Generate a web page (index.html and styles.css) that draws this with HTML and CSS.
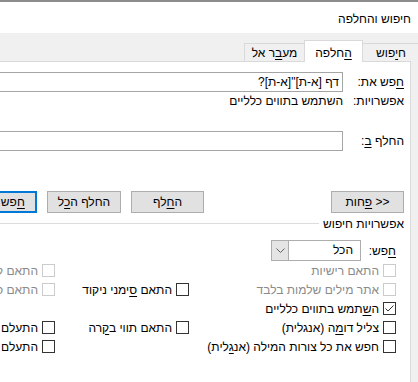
FILE: index.html
```html
<!DOCTYPE html>
<html dir="rtl" lang="he">
<head>
    <meta charset="utf-8">
    <title>חיפוש והחלפה</title>
    <link rel="stylesheet" href="styles.css">
</head>
<body>
    <div class="dialog">
        <!-- Title bar -->
        <div class="titlebar">חיפוש והחלפה</div>

        <!-- Tabs -->
        <div class="tabs">
            <div class="tab tab-first">ח<u>י</u>פוש</div>
            <div class="tab tab-active"><u>ה</u>חלפה</div>
            <div class="tab tab-last">מע<u>ב</u>ר אל</div>
        </div>

        <div class="panel">
            <div class="field">
                <div class="field-label"><u>ח</u>פש את:</div>
                <div class="textbox">דף [א-ת]"[א-ת]?</div>
            </div>
            <div class="field field-info">
                <div class="field-label">אפשרויות:</div>
                <div class="field-value">השתמש בתווים כלליים</div>
            </div>
            <div class="field field-replace">
                <div class="field-label">החלף <u>ב</u>:</div>
                <div class="textbox"></div>
            </div>

            <div class="buttons">
                <div class="btn">&lt;&lt; <u>פ</u>חות</div>
                <div class="btn btn-gap">ה<u>ח</u>לף</div>
                <div class="btn">החלף ה<u>כ</u>ל</div>
                <div class="btn btn-default"><u>ח</u>פש הבא</div>
            </div>

            <!-- Search options -->
            <div class="group-title">
                <span>אפשרויות חיפוש</span>
                <span class="group-line"></span>
            </div>
            <div class="group">
                <div class="search-row">
                    <div class="search-label"><u>ח</u>פש:</div>
                    <div class="combo">
                        <div class="combo-text">הכל</div>
                        <div class="combo-arrow">
                            <svg width="9" height="5" viewBox="0 0 9 5"><polyline points="0.5,0.5 4.5,4.5 8.5,0.5" fill="none" stroke="#606060" stroke-width="1"/></svg>
                        </div>
                    </div>
                </div>

                <div class="checks">
                    <!-- row 1 -->
                    <div class="check disabled"><span class="box"></span><span>התאם רישיות</span></div>
                    <div></div>
                    <div class="check disabled"><span class="box"></span><span>התאם קידומת</span></div>
                    <!-- row 2 -->
                    <div class="check disabled"><span class="box"></span><span>אתר מילים שלמות בלבד</span></div>
                    <div class="check"><span class="box"></span><span>התאם <u>ס</u>ימני ניקוד</span></div>
                    <div class="check disabled"><span class="box"></span><span>התאם סיומת</span></div>
                    <!-- row 3 -->
                    <div class="check"><span class="box"><svg width="11" height="11" viewBox="0 0 11 11"><polyline points="1.5,5.5 4,8 9.5,2.5" fill="none" stroke="#333" stroke-width="1"/></svg></span><span>ה<u>ש</u>תמש בתווים כלליים</span></div>
                    <div></div>
                    <div></div>
                    <!-- row 4 -->
                    <div class="check"><span class="box"></span><span>צליל דו<u>מ</u>ה (אנגלית)</span></div>
                    <div class="check"><span class="box"></span><span>התאם תווי ב<u>ק</u>רה</span></div>
                    <div class="check"><span class="box"></span><span>התעלם מסימני פיסוק</span></div>
                    <!-- row 5 -->
                    <div class="check"><span class="box"></span><span>חפש את כל צורות המילה (אנ<u>ג</u>לית)</span></div>
                    <div></div>
                    <div class="check"><span class="box"></span><span>התעלם מתווי רווח לבן</span></div>
                </div>
            </div>
        </div>
    </div>
</body>
</html>
```

FILE: styles.css
```css
* {
    box-sizing: border-box;
}

html, body {
    margin: 0;
    padding: 0;
}

body {
    width: 418px;
    height: 382px;
    overflow: hidden;
    background-color: #f0f0f0;
    font-family: "Liberation Sans", "DejaVu Sans", sans-serif;
    font-size: 12px;
    color: #000;
}

u {
    text-underline-offset: 2px;
}

.dialog {
    width: 640px;
}

.titlebar {
    height: 33px;
    border-top: 2px solid #8c8c8c;
    background-color: #fff;
    padding: 10px 7px 0 0;
    line-height: 15px;
}

/* Tabs */
.tabs {
    display: flex;
    align-items: flex-end;
    height: 28px;
    margin-right: -2px;
}

.tab {
    height: 18px;
    border: 1px solid #d9d9d9;
    border-bottom: none;
    background-color: #f0f0f0;
    padding-top: 1px;
    line-height: 16px;
    text-align: center;
}

.tab-first {
    width: 58px;
}

.tab-active {
    width: 59px;
    height: 22px;
    margin: 0 -1px -1px;
    padding-top: 4px;
    background-color: #fff;
    position: relative;
    z-index: 1;
}

.tab-last {
    width: 61px;
}

.panel {
    margin-right: 7px;
    height: 400px;
    border-top: 1px solid #d9d9d9;
    border-right: 1px solid #d9d9d9;
    background-color: #fff;
    padding: 10px 6px 0 0;
}

/* Find / replace fields */
.field {
    display: flex;
    align-items: center;
    height: 20px;
}

.field-label {
    width: 61px;
    flex: none;
}

.textbox {
    flex: 1;
    height: 20px;
    border: 1px solid #a5a5a5;
    padding: 0 3px;
    line-height: 18px;
}

.field-info {
    height: 18px;
}

.field-replace {
    margin-top: 21px;
}

/* Buttons */
.buttons {
    display: flex;
    margin-top: 40px;
}

.btn {
    width: 73px;
    height: 22px;
    flex: none;
    border: 1px solid #adadad;
    background-color: #e1e1e1;
    line-height: 20px;
    text-align: center;
}

.btn-gap {
    margin-right: 127px;
}

.btn-gap + .btn,
.btn-gap + .btn + .btn {
    margin-right: 10px;
    width: 74px;
}

.btn-default {
    border: 2px solid #0078d7;
    line-height: 18px;
}

/* Search options group */
.group-title {
    display: flex;
    align-items: center;
    height: 16px;
    margin-top: 3px;
}

.group-line {
    flex: 1;
    margin: -2px 4px 0 0;
    border-top: 1px solid #dcdcdc;
}

.group {
    padding-right: 8px;
}

.search-row {
    display: flex;
    align-items: center;
    height: 21px;
    margin-top: 8px;
}

.search-label {
    width: 35px;
}

.combo {
    display: flex;
    width: 90px;
    height: 21px;
    border: 1px solid #adadad;
    background-color: #fff;
}

.combo-text {
    flex: 1;
    padding-right: 7px;
    line-height: 19px;
}

.combo-arrow {
    width: 17px;
    border-right: 1px solid #adadad;
    background-color: #e5e5e5;
    display: flex;
    align-items: center;
    justify-content: center;
}

.checks {
    display: grid;
    grid-template-columns: 207px 134px 1fr;
    grid-auto-rows: 19px;
}

.check {
    display: flex;
    align-items: center;
    gap: 4px;
    white-space: nowrap;
}

.box {
    width: 13px;
    height: 13px;
    flex: none;
    border: 1px solid #333;
    background-color: #fff;
    display: flex;
}

.disabled {
    color: #8a8a8a;
}

.disabled .box {
    border-color: #cccccc;
}
```
